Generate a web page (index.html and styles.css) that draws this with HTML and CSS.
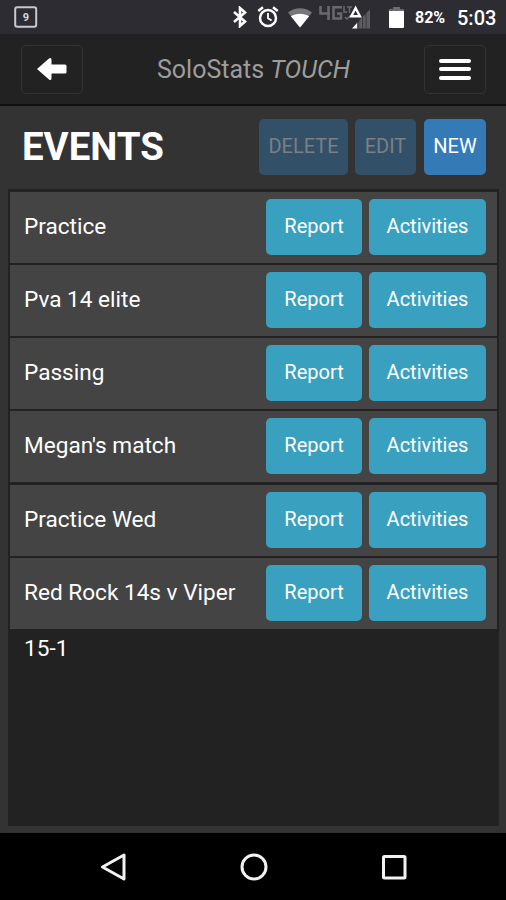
FILE: index.html
```html
<!DOCTYPE html>
<html lang="en">

<head>
    <meta charset="UTF-8">
    <meta name="viewport" content="width=device-width, initial-scale=1.0">
    <title>SoloStats TOUCH</title>
    <link rel="stylesheet" href="styles.css">
</head>

<body>
    <div class="status-bar">
        <svg class="calendar" width="24" height="22" viewBox="0 0 24 22">
            <rect x="1.2" y="1.2" width="21" height="19.6" rx="2" fill="none" stroke="#c9c8cb" stroke-width="2" />
            <text x="11.8" y="14.8" text-anchor="middle" font-size="11" font-weight="700" fill="#d8d8da">9</text>
        </svg>
        <svg class="bluetooth" width="14" height="22" viewBox="0 0 14 22">
            <path d="M1 6L12 15.6L7 20V2L12 6.4L1 16" fill="none" stroke="#fff" stroke-width="2.6" />
        </svg>
        <svg class="alarm" width="22" height="22" viewBox="0 0 22 22" fill="none" stroke="#fff">
            <circle cx="11" cy="12" r="8" stroke-width="2.5" />
            <path d="M1.3 5L6 1.3M20.7 5L16 1.3" stroke-width="2.5" />
            <path d="M11 7V12.3L14.6 14.5" stroke-width="1.8" />
        </svg>
        <svg class="wifi" width="24" height="20" viewBox="0 0 24 20">
            <path d="M0 4.5C7-1.2 17-1.2 24 4.5L12 19.5Z" fill="#77767b" />
            <path d="M2.8 8.2C8.5 4.8 15.5 4.8 21.2 8.2L12 19.5Z" fill="#fff" />
        </svg>
        <svg class="signal" width="52" height="26" viewBox="0 0 52 26">
            <g fill="none" stroke="#69686e" stroke-width="2.6">
                <path d="M1.5 2V9.5H11M9.5 2V16" />
                <path d="M23 3.3H14.5V14.5H22V9.5H18" />
            </g>
            <path d="M25 2V8H28M28 3H33M30.5 3V9M26 13L28 15L32 11" fill="none" stroke="#69686e" stroke-width="1.5" />
            <path d="M33 24.5L38 19V24.5Z" fill="#fff" />
            <path d="M38 19L39.5 17.5V24.5H38ZM40.2 16.5L43 13.5V24.5H40.2ZM43.7 12.8L46.7 9.8V24.5H43.7ZM47.4 9L51 5.5V24.5H47.4Z" fill="#5d5c61" />
            <path d="M36.6 4L40.9 12.2H32.3Z" fill="#2d2c33" stroke="#fff" stroke-width="2.4" />
        </svg>
        <svg class="battery" width="15" height="21" viewBox="0 0 15 21">
            <path d="M0 4V3Q0 2 1 2H4V0H11V2H14Q15 2 15 3V4Z" fill="#6d6c70" />
            <path d="M0 4H15V20Q15 21 14 21H1Q0 21 0 20Z" fill="#fff" />
        </svg>
        <span class="percent">82%</span>
        <span class="clock">5:03</span>
    </div>

    <div class="navbar">
        <button class="nav-btn">
            <svg width="32" height="24" viewBox="0 0 32 24">
                <path d="M1 12L13 1.5Q15.5 0 15.5 3V7.5H29Q30.5 7.5 30.5 9V15Q30.5 16.5 29 16.5H15.5V21Q15.5 24 13 22.5Z" fill="#fff" />
            </svg>
        </button>
        <div class="brand">SoloStats <i>TOUCH</i></div>
        <button class="nav-btn">
            <span class="bar"></span>
            <span class="bar"></span>
            <span class="bar"></span>
        </button>
    </div>

    <div class="content">
        <div class="heading">
            <h1>EVENTS</h1>
            <button class="btn btn-primary btn-delete" disabled>DELETE</button>
            <button class="btn btn-primary btn-edit" disabled>EDIT</button>
            <button class="btn btn-primary btn-new">NEW</button>
        </div>
        <div class="list">
            <div class="row">
                <div class="name">Practice</div>
                <button class="btn btn-info btn-report">Report</button>
                <button class="btn btn-info btn-activities">Activities</button>
            </div>
            <div class="row">
                <div class="name">Pva 14 elite</div>
                <button class="btn btn-info btn-report">Report</button>
                <button class="btn btn-info btn-activities">Activities</button>
            </div>
            <div class="row">
                <div class="name">Passing</div>
                <button class="btn btn-info btn-report">Report</button>
                <button class="btn btn-info btn-activities">Activities</button>
            </div>
            <div class="row">
                <div class="name">Megan's match</div>
                <button class="btn btn-info btn-report">Report</button>
                <button class="btn btn-info btn-activities">Activities</button>
            </div>
            <div class="row">
                <div class="name">Practice Wed</div>
                <button class="btn btn-info btn-report">Report</button>
                <button class="btn btn-info btn-activities">Activities</button>
            </div>
            <div class="row">
                <div class="name">Red Rock 14s v Viper 15-1</div>
                <button class="btn btn-info btn-report">Report</button>
                <button class="btn btn-info btn-activities">Activities</button>
            </div>
        </div>
    </div>

    <div class="system-nav">
        <svg width="28" height="30" viewBox="0 0 28 30">
            <path d="M2.5 15L24 3V27Z" fill="none" stroke="#f2f2f2" stroke-width="3" stroke-linejoin="round" />
        </svg>
        <svg width="28" height="30" viewBox="0 0 28 30">
            <circle cx="14" cy="15" r="12" fill="none" stroke="#f2f2f2" stroke-width="3" />
        </svg>
        <svg width="28" height="30" viewBox="0 0 28 30">
            <rect x="3.5" y="4.5" width="21.5" height="21.5" rx="1" fill="none" stroke="#f2f2f2" stroke-width="3" />
        </svg>
    </div>
</body>

</html>
```
FILE: styles.css
```css
* {
    box-sizing: border-box;
}

body {
    margin: 0;
    height: 900px;
    display: flex;
    flex-direction: column;
    background-color: #333;
    color: #fff;
    font-family: Roboto, sans-serif;
    overflow: hidden;
}

svg {
    display: block;
    flex: none;
}

button {
    font-family: inherit;
    cursor: pointer;
}

/* android status bar */
.status-bar {
    height: 34px;
    flex: none;
    display: flex;
    align-items: center;
    padding: 0 11px 0 14px;
    background-color: #2d2c33;
}

.bluetooth {
    margin-left: auto;
    margin-right: 10px;
}

.alarm {
    margin-right: 9px;
}

.wifi {
    margin-right: 7px;
    margin-top: 2px;
}

.signal {
    margin-right: 18px;
}

.battery {
    margin-right: 11px;
}

.percent {
    width: 32px;
    margin-right: 10px;
    padding-top: 1px;
    font-size: 16px;
    font-weight: 700;
    white-space: nowrap;
}

.clock {
    width: 38px;
    font-size: 20px;
    font-weight: 500;
    padding-top: 2px;
}

/* top navbar */
.navbar {
    height: 72px;
    flex: none;
    display: flex;
    justify-content: space-between;
    align-items: center;
    padding: 0 20px 0 21px;
    background-color: #222;
    border-bottom: 2px solid #101010;
}

.nav-btn {
    width: 62px;
    height: 49px;
    padding: 0;
    display: flex;
    flex-direction: column;
    justify-content: center;
    align-items: center;
    gap: 4.5px;
    background-color: transparent;
    border: 1px solid #333;
    border-radius: 5px;
}

.bar {
    width: 32px;
    height: 4px;
    border-radius: 2px;
    background-color: #fff;
}

.brand {
    font-size: 25px;
    color: #9d9d9d;
}

/* events */
.content {
    flex: 1;
    display: flex;
    flex-direction: column;
    padding: 0 7px 7px 8px;
}

.heading {
    height: 83px;
    flex: none;
    display: flex;
    align-items: center;
    padding: 0 13px 2px 14px;
}

h1 {
    flex: 1;
    margin: 0;
    font-size: 38.4px;
    font-weight: 700;
}

.btn {
    height: 56px;
    flex: none;
    padding: 0 0 2px;
    border: none;
    border-radius: 5px;
    color: #fff;
    font-size: 20px;
    text-align: center;
}

.btn-primary {
    background-color: #337ab7;
}

.btn-primary:disabled {
    background-color: #335069;
    color: #7a8085;
}

.btn-delete {
    width: 89px;
    margin-right: 7px;
}

.btn-edit {
    width: 61px;
    margin-right: 8px;
}

.btn-new {
    width: 62px;
}

.list {
    flex: 1;
    padding: 3px 2px 0;
    background-color: #222;
}

.row {
    height: 71px;
    margin-bottom: 2.15px;
    display: flex;
    align-items: flex-start;
    padding: 7px 11px 0 14px;
    background-color: #444;
}

.name {
    flex: 1;
    font-size: 22.6px;
    line-height: 56px;
}

.btn-info {
    background-color: #3aa0c0;
}

.btn-report {
    width: 96px;
    margin-right: 7px;
}

.btn-activities {
    width: 117px;
}

/* android navigation buttons */
.system-nav {
    height: 67px;
    flex: none;
    display: flex;
    justify-content: center;
    align-items: center;
    gap: 112px;
    padding-left: 1px;
    background-color: #000;
}
```
